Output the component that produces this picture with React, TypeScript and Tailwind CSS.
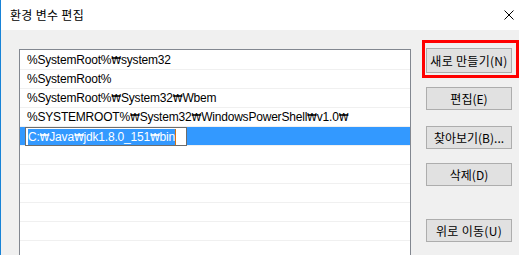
const paths = [
  '%SystemRoot%₩system32',
  '%SystemRoot%',
  '%SystemRoot%₩System32₩Wbem',
  '%SYSTEMROOT%₩System32₩WindowsPowerShell₩v1.0₩',
];

const ui = { fontFamily: '"Liberation Sans", "Noto Sans CJK KR", sans-serif' };
const kr = { fontFamily: '"Noto Sans CJK KR", "Liberation Sans", sans-serif' };

// the won sign is drawn from a font that has a narrow glyph for it
const PathText = ({ text }: { text: string }) => {
  const parts = text.split('₩');
  return (
    <>
      {parts.map((part, i) => (
        <span key={i}>
          {part}
          {i < parts.length - 1 && (
            <span style={{ fontFamily: '"DejaVu Sans", "Noto Sans", sans-serif' }} className="text-[10px]">
              ₩
            </span>
          )}
        </span>
      ))}
    </>
  );
};

const Btn = ({ label, className }: { label: string; className: string }) => (
  <div
    className={`w-[86px] flex items-center justify-center bg-[#e1e1e1] border border-[#adadad] text-[12px] text-black ${className}`}
    style={kr}
  >
    {label}
  </div>
);

export default function App() {
  return (
    <div className="w-[519px] h-[255px] overflow-hidden bg-[#f0f0f0] border-l border-[#1883d7] flex flex-col">
      <div className="h-[30px] shrink-0 bg-white flex items-center justify-between pl-[9px] pr-[5px]">
        <span className="text-[12px] text-black tracking-[0.3px]" style={kr}>
          환경 변수 편집
        </span>
        <svg width="10" height="10" viewBox="0 0 10 10">
          <path d="M0.5 0.5 L9.5 9.5 M9.5 0.5 L0.5 9.5" stroke="#000" strokeWidth="1" />
        </svg>
      </div>

      <div className="flex flex-1">
        <div className="ml-[18px] mt-[19px] w-[392px] h-[260px] shrink-0 bg-white border border-[#828790] pt-px">
          {paths.map((p) => (
            <div
              key={p}
              className="h-[19px] border-b border-[#f0f0f0] pl-[7px] leading-[18px] text-[12px] tracking-[-0.2px] text-black whitespace-nowrap"
              style={ui}
            >
              <PathText text={p} />
            </div>
          ))}
          <div className="h-[19px] border-b border-[#f0f0f0] flex items-start">
            <div className="h-[18px] w-full bg-[#3399ff] flex">
              <div className="ml-[5px] w-[162px] h-[19px] bg-white border border-[#6d6d6d] relative z-10 flex items-center pl-[2px]">
                <span
                  className="bg-[#3399ff] text-white text-[12px] tracking-[-0.2px] leading-[16px] h-[16px] whitespace-nowrap"
                  style={ui}
                >
                  <PathText text="C:₩Java₩jdk1.8.0_151₩bin" />
                </span>
                <span className="w-px h-[16px] bg-[#d9730d]" />
              </div>
            </div>
          </div>
          {[0, 1, 2, 3, 4, 5].map((i) => (
            <div key={i} className="h-[19px] border-b border-[#f0f0f0]" />
          ))}
        </div>

        <div className="ml-[15px] flex flex-col pt-[18px]">
          <div className="relative">
            <Btn label="새로 만들기(N)" className="h-[25px] tracking-[0.3px]" />
            <div className="absolute left-[-4px] top-[-8px] right-[-7px] bottom-[-5px] border-[3px] border-[#ff0000]" />
          </div>
          <Btn label="편집(E)" className="h-[23px] mt-[14px]" />
          <Btn label="찾아보기(B)..." className="h-[23px] mt-[16px]" />
          <Btn label="삭제(D)" className="h-[23px] mt-[14px]" />
          <Btn label="위로 이동(U)" className="h-[23px] mt-[33px] tracking-[0.3px]" />
        </div>
      </div>
    </div>
  );
}
